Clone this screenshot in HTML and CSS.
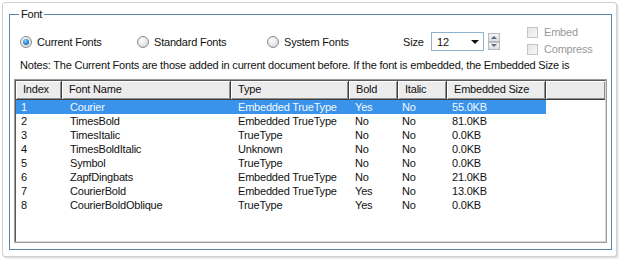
FILE: index.html
```html
<!DOCTYPE html>
<html>
<head>
<meta charset="utf-8">
<link rel="stylesheet" href="styles.css">
</head>
<body>
<div class="frame">
  <fieldset class="group">
    <legend>Font</legend>
    <div class="top">
      <label class="opt o1"><span class="radio on"></span>Current Fonts</label>
      <label class="opt o2"><span class="radio"></span>Standard Fonts</label>
      <label class="opt o3"><span class="radio"></span>System Fonts</label>
      <span class="size-label">Size</span>
      <div class="combo"><span class="val">12</span><span class="arrow"></span></div>
      <div class="spin"><span class="sb up"><i></i></span><span class="sb down"><i></i></span></div>
      <div class="checks">
        <label class="chk"><span class="box"></span>Embed</label>
        <label class="chk"><span class="box"></span>Compress</label>
      </div>
    </div>
    <p class="notes">Notes: The Current Fonts are those added in current document before. If the font is embedded, the Embedded Size is</p>
    <div class="list">
      <div class="list-in">
        <div class="hdr">
          <div class="hc c1">Index</div>
          <div class="hc c2">Font Name</div>
          <div class="hc c3">Type</div>
          <div class="hc c4">Bold</div>
          <div class="hc c5">Italic</div>
          <div class="hc c6">Embedded Size</div>
          <div class="hc c7"></div>
        </div>
        <div class="row sel"><span class="c1">1</span><span class="c2">Courier</span><span class="c3">Embedded TrueType</span><span class="c4">Yes</span><span class="c5">No</span><span class="c6">55.0KB</span></div>
        <div class="row"><span class="c1">2</span><span class="c2">TimesBold</span><span class="c3">Embedded TrueType</span><span class="c4">No</span><span class="c5">No</span><span class="c6">81.0KB</span></div>
        <div class="row"><span class="c1">3</span><span class="c2">TimesItalic</span><span class="c3">TrueType</span><span class="c4">No</span><span class="c5">No</span><span class="c6">0.0KB</span></div>
        <div class="row"><span class="c1">4</span><span class="c2">TimesBoldItalic</span><span class="c3">Unknown</span><span class="c4">No</span><span class="c5">No</span><span class="c6">0.0KB</span></div>
        <div class="row"><span class="c1">5</span><span class="c2">Symbol</span><span class="c3">TrueType</span><span class="c4">No</span><span class="c5">No</span><span class="c6">0.0KB</span></div>
        <div class="row"><span class="c1">6</span><span class="c2">ZapfDingbats</span><span class="c3">Embedded TrueType</span><span class="c4">No</span><span class="c5">No</span><span class="c6">21.0KB</span></div>
        <div class="row"><span class="c1">7</span><span class="c2">CourierBold</span><span class="c3">Embedded TrueType</span><span class="c4">Yes</span><span class="c5">No</span><span class="c6">13.0KB</span></div>
        <div class="row"><span class="c1">8</span><span class="c2">CourierBoldOblique</span><span class="c3">TrueType</span><span class="c4">Yes</span><span class="c5">No</span><span class="c6">0.0KB</span></div>
      </div>
    </div>
  </fieldset>
</div>
</body>
</html>
```
FILE: styles.css
```css
* { box-sizing: border-box; }
html, body { margin: 0; padding: 0; background: #fff; }
body {
  font-family: "Liberation Sans", Arial, sans-serif;
  font-size: 11px;
  letter-spacing: -0.2px;
  color: #111;
}
.frame {
  margin: 2px 5px 5px 2px;
  height: 255px;
  border: 1px solid #cfcfcf;
  border-radius: 3px;
  box-shadow: 1px 1px 0 #e2e2e2, 2px 2px 1px #ececec;
  background: #fff;
  padding: 4px 4px 6px 6px;
}
.group {
  margin: 0;
  height: 100%;
  border: 1px solid #5b84a6;
  padding: 5px 4px 6px 4px;
  min-width: 0;
}
.group legend {
  padding: 0 2px;
  margin-left: 5px;
  line-height: 14px;
  color: #111;
}
.top {
  display: flex;
  align-items: center;
  height: 31px;
  padding-left: 6px;
}
.opt {
  display: flex;
  align-items: center;
  gap: 5px;
  flex: none;
}
.o1 { width: 117px; }
.o2 { width: 130px; }
.o3 { width: 136px; }
.radio {
  width: 12px;
  height: 12px;
  border-radius: 50%;
  border: 1px solid #8a8d90;
  background: radial-gradient(circle at 40% 35%, #ffffff 0%, #e9e9e9 45%, #cfd0d2 100%);
  flex: none;
  position: relative;
}
.radio.on::after {
  content: "";
  position: absolute;
  left: 2px; top: 2px;
  width: 6px; height: 6px;
  border-radius: 50%;
  background: radial-gradient(circle at 40% 35%, #8fd0ff 0%, #2584d6 55%, #0d4f95 100%);
}
.size-label { width: 28px; flex: none; }
.combo {
  width: 53px;
  height: 19px;
  border: 1px solid #8fb1cc;
  background: #fff;
  display: flex;
  align-items: center;
  justify-content: space-between;
  padding: 0 4px 0 5px;
  flex: none;
}
.arrow {
  width: 0; height: 0;
  border-left: 4px solid transparent;
  border-right: 4px solid transparent;
  border-top: 4px solid #111;
}
.spin {
  margin-left: 4px;
  width: 12px;
  height: 17px;
  display: flex;
  flex-direction: column;
  flex: none;
}
.sb {
  flex: 1;
  border: 1px solid #b8bcc2;
  background: linear-gradient(#f4f4f4, #dcdde0);
  display: flex;
  align-items: center;
  justify-content: center;
}
.sb i {
  width: 0; height: 0;
  border-left: 3px solid transparent;
  border-right: 3px solid transparent;
}
.up i { border-bottom: 3px solid #5d6b84; }
.down i { border-top: 3px solid #5d6b84; }
.checks {
  margin-left: 27px;
  display: flex;
  flex-direction: column;
  gap: 4px;
  margin-top: -2px;
}
.chk {
  display: flex;
  align-items: center;
  gap: 6px;
  color: #9a9a9a;
  height: 13px;
}
.box {
  width: 11px;
  height: 11px;
  border: 1px solid #c4c4c4;
  background: linear-gradient(135deg, #e6e6e6, #f6f6f6);
  flex: none;
}
.notes {
  margin: 1px 0 7px 6px;
  line-height: 14px;
  white-space: nowrap;
}
.list {
  height: 164px;
  border: 1px solid #9c9c9c;
  background: #fff;
}
.list-in {
  height: 100%;
  border: 1px solid #5a5a5a;
  border-right-color: #d8d8d8;
  border-bottom-color: #d8d8d8;
  overflow: hidden;
}
.hdr {
  display: grid;
  grid-template-columns: 46px 169px 118px 49px 49px 99px 1fr;
  height: 19px;
}
.hc {
  background: #ececec;
  border-right: 1px solid #404040;
  border-bottom: 1px solid #404040;
  box-shadow: inset 1px 1px #fff, inset -1px -1px #8e8e8e;
  line-height: 17px;
  padding-left: 7px;
  white-space: nowrap;
}
.hc.c7 { border-right: none; }
.row {
  display: grid;
  grid-template-columns: 46px 169px 118px 49px 49px 99px;
  width: 530px;
  height: 14px;
  line-height: 14px;
  white-space: nowrap;
}
.row span { padding-left: 6px; overflow: hidden; }
.row .c1 { padding-left: 5px; }
.row .c2 { padding-left: 8px; }
.row .c3 { padding-left: 7px; }
.row .c4 { padding-left: 6px; }
.row .c5 { padding-left: 4px; }
.row .c6 { padding-left: 5px; }
.row.sel { background: #3993ea; color: #f4f8ff; }
```
